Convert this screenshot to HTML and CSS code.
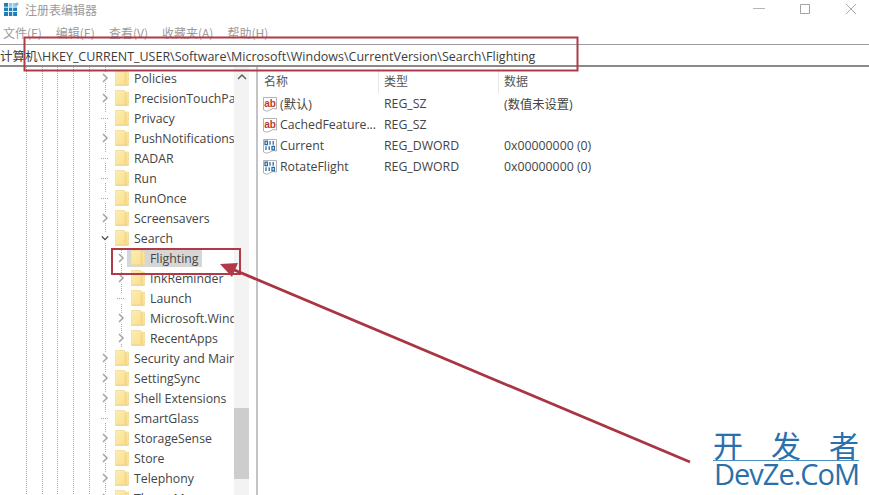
FILE: index.html
```html
<!DOCTYPE html>
<html lang="zh-CN">
<head>
<meta charset="utf-8">
<title>注册表编辑器</title>
<link rel="stylesheet" href="styles.css">
</head>
<body>
<svg class="defs" width="0" height="0" aria-hidden="true">
  <defs>
    <linearGradient id="fg" x1="0" y1="0" x2="1" y2="1"><stop offset="0" stop-color="#fdedb0"/><stop offset="1" stop-color="#f9de8e"/></linearGradient>
    <symbol id="folder" viewBox="0 0 14 16">
      <path d="M0 0.5H9.5V2H13.5V15.5H0Z" fill="url(#fg)" stroke="#f3dc98" stroke-width="0.8"/>
      <path d="M10.5 2.5V15" stroke="#f5d67e" stroke-width="1.6"/>
      <path d="M0.5 15H13" stroke="#f0d386" stroke-width="1"/>
    </symbol>
    <symbol id="ic-sz" viewBox="0 0 16 16">
      <path d="M1.5 1.5H14.5V13Q11 11.5 8 14T1.5 14Z" fill="#fff" stroke="#b2b2ba"/>
      <text x="8" y="10.5" text-anchor="middle" class="ab">ab</text>
    </symbol>
    <symbol id="ic-bin" viewBox="0 0 16 16">
      <path d="M1.5 1.5H14.5V13Q11 11.5 8 14T1.5 14Z" fill="#fff" stroke="#b2b2ba"/>
      <path d="M3 3.2H5.4V6.6H3ZM8 3V6.8M11.2 3V6.8M4 8.2V12M7.2 8.2V12M10 8.4H12.4V11.8H10Z" fill="none" stroke="#2a6aa3" stroke-width="1.3"/>
    </symbol>
    <symbol id="chev-r" viewBox="0 0 8 10"><path d="M2 1L6 5L2 9" fill="none" stroke="#a6a6a6" stroke-width="1.6"/></symbol>
    <symbol id="chev-d" viewBox="0 0 10 8"><path d="M1 2L5 6L9 2" fill="none" stroke="#404040" stroke-width="1.6"/></symbol>
  </defs>
</svg>

<div class="window">
  <header class="titlebar">
    <svg class="appicon" viewBox="0 0 15 14" width="15" height="14">
      <rect x="0" y="1" width="13" height="13" fill="#1f7fb8"/>
      <rect x="4.5" y="1" width="8.5" height="4" fill="#8cc8ea"/>
      <path d="M4.5 1V14M8.7 1V14M0 5.2H13M0 9.5H13" stroke="#dff0f8" stroke-width="1"/>
      <circle cx="13" cy="2" r="1.6" fill="#8fb4c9"/>
    </svg>
    <span class="apptitle">注册表编辑器</span>
    <div class="controls">
      <svg viewBox="0 0 12 12" width="12" height="12"><path d="M0 5.5H13" stroke="#b5b5b5"/></svg>
      <svg viewBox="0 0 12 12" width="12" height="12"><path d="M1.5 1.5H10.5V10.5H1.5Z" fill="none" stroke="#a3a3a3"/></svg>
      <svg viewBox="0 0 12 12" width="12" height="12"><path d="M1 1L11 11M11 1L1 11" stroke="#a8a8a8"/></svg>
    </div>
  </header>

  <nav class="menubar">
    <span>文件(F)</span><span>编辑(E)</span><span>查看(V)</span><span>收藏夹(A)</span><span>帮助(H)</span>
  </nav>

  <div class="address">计算机\HKEY_CURRENT_USER\Software\Microsoft\Windows\CurrentVersion\Search\Flighting</div>

  <main class="panes">
    <section class="tree">
      <div class="rows">
        <div class="row"><svg class="chev"><use href="#chev-r"/></svg><svg class="folder"><use href="#folder"/></svg><span>Policies</span></div>
        <div class="row"><svg class="chev"><use href="#chev-r"/></svg><svg class="folder"><use href="#folder"/></svg><span>PrecisionTouchPad</span></div>
        <div class="row leaf"><i class="chev"></i><svg class="folder"><use href="#folder"/></svg><span>Privacy</span></div>
        <div class="row"><svg class="chev"><use href="#chev-r"/></svg><svg class="folder"><use href="#folder"/></svg><span>PushNotifications</span></div>
        <div class="row leaf"><i class="chev"></i><svg class="folder"><use href="#folder"/></svg><span>RADAR</span></div>
        <div class="row leaf"><i class="chev"></i><svg class="folder"><use href="#folder"/></svg><span>Run</span></div>
        <div class="row leaf"><i class="chev"></i><svg class="folder"><use href="#folder"/></svg><span>RunOnce</span></div>
        <div class="row"><svg class="chev"><use href="#chev-r"/></svg><svg class="folder"><use href="#folder"/></svg><span>Screensavers</span></div>
        <div class="row"><svg class="chev"><use href="#chev-d"/></svg><svg class="folder"><use href="#folder"/></svg><span>Search</span></div>
        <div class="row sub"><svg class="chev"><use href="#chev-r"/></svg><div class="selected"><svg class="folder"><use href="#folder"/></svg><span>Flighting</span></div></div>
        <div class="row sub"><svg class="chev"><use href="#chev-r"/></svg><svg class="folder"><use href="#folder"/></svg><span>InkReminder</span></div>
        <div class="row sub leaf"><i class="chev"></i><svg class="folder"><use href="#folder"/></svg><span>Launch</span></div>
        <div class="row sub"><svg class="chev"><use href="#chev-r"/></svg><svg class="folder"><use href="#folder"/></svg><span>Microsoft.Windows</span></div>
        <div class="row sub"><svg class="chev"><use href="#chev-r"/></svg><svg class="folder"><use href="#folder"/></svg><span>RecentApps</span></div>
        <div class="row"><svg class="chev"><use href="#chev-r"/></svg><svg class="folder"><use href="#folder"/></svg><span>Security and Maintenance</span></div>
        <div class="row"><svg class="chev"><use href="#chev-r"/></svg><svg class="folder"><use href="#folder"/></svg><span>SettingSync</span></div>
        <div class="row"><svg class="chev"><use href="#chev-r"/></svg><svg class="folder"><use href="#folder"/></svg><span>Shell Extensions</span></div>
        <div class="row leaf"><i class="chev"></i><svg class="folder"><use href="#folder"/></svg><span>SmartGlass</span></div>
        <div class="row"><svg class="chev"><use href="#chev-r"/></svg><svg class="folder"><use href="#folder"/></svg><span>StorageSense</span></div>
        <div class="row"><svg class="chev"><use href="#chev-r"/></svg><svg class="folder"><use href="#folder"/></svg><span>Store</span></div>
        <div class="row"><svg class="chev"><use href="#chev-r"/></svg><svg class="folder"><use href="#folder"/></svg><span>Telephony</span></div>
        <div class="row"><svg class="chev"><use href="#chev-r"/></svg><svg class="folder"><use href="#folder"/></svg><span>ThemeManager</span></div>
      </div>
    </section>
    <div class="scrollbar">
      <svg class="scroll-up" viewBox="0 0 10 8" width="10" height="8"><path d="M1 6L5 2L9 6" fill="none" stroke="#606060" stroke-width="1.5"/></svg>
      <div class="thumb"></div>
    </div>
    <section class="list">
      <div class="list-head"><span>名称</span><span>类型</span><span>数据</span></div>
      <div class="list-row"><span class="name"><svg class="vicon"><use href="#ic-sz"/></svg>(默认)</span><span>REG_SZ</span><span>(数值未设置)</span></div>
      <div class="list-row"><span class="name"><svg class="vicon"><use href="#ic-sz"/></svg>CachedFeature...</span><span>REG_SZ</span><span></span></div>
      <div class="list-row"><span class="name"><svg class="vicon"><use href="#ic-bin"/></svg>Current</span><span>REG_DWORD</span><span>0x00000000 (0)</span></div>
      <div class="list-row"><span class="name"><svg class="vicon"><use href="#ic-bin"/></svg>RotateFlight</span><span>REG_DWORD</span><span>0x00000000 (0)</span></div>
    </section>
  </main>
</div>

<svg class="annotation" viewBox="0 0 869 495" width="869" height="495" aria-hidden="true">
  <rect x="24.5" y="37.5" width="553" height="33" fill="none" stroke="#b03a48" stroke-width="2"/>
  <rect x="112" y="249" width="128" height="25" fill="none" stroke="#b03a48" stroke-width="2"/>
  <path d="M690 462L232 269" stroke="#a93442" stroke-width="2.8" fill="none"/>
  <path d="M220 264L238 263L232 277Z" fill="#b03a48"/>
</svg>

<div class="watermark">
  <div class="wm-cn"><span>开</span><span>发</span><span>者</span></div>
  <div class="wm-en">DevZe.CoM</div>
</div>
</body>
</html>
```
FILE: styles.css
```css
* { box-sizing: border-box; }
html, body { margin: 0; height: 100%; }
body {
  width: 869px;
  height: 495px;
  overflow: hidden;
  background: #fff;
  font-family: "Open Sans", "Noto Sans CJK SC", sans-serif;
  font-size: 12.3px;
  color: #444;
  position: relative;
}
.defs { position: absolute; }
.ab { font: bold 10px "Liberation Sans", sans-serif; fill: #c23a2e; }
.window { display: flex; flex-direction: column; height: 495px; }

.titlebar { height: 22px; display: flex; align-items: center; padding: 0 12px 4px 4px; flex: none; }
.appicon { flex: none; }
.apptitle { margin-left: 6px; color: #9a9a9a; font-family: "Noto Sans CJK SC", sans-serif; font-size: 12px; }
.controls { margin-left: auto; display: flex; gap: 34px; margin-top: -1px; }

.menubar { height: 22px; flex: none; display: flex; gap: 14px; padding: 0 0 2px 3px; align-items: center; color: #9b9b9b; font-family: "Noto Sans CJK SC", sans-serif; font-size: 12px; }

.address { height: 23px; flex: none; border-top: 1px solid #9c9c9c; border-bottom: 2px solid #8a8a8a; padding-top: 1px; display: flex; align-items: center; font-size: 12.5px; color: #3c3c3c; white-space: nowrap; overflow: hidden; }

.panes { flex: 1; min-height: 0; display: flex; }

.tree {
  width: 234px;
  flex: none;
  overflow: hidden;
  padding-top: 1px;
  background-image:
    linear-gradient(#a8a8a8 50%, transparent 50%),
    linear-gradient(#a8a8a8 50%, transparent 50%),
    linear-gradient(#a8a8a8 50%, transparent 50%),
    linear-gradient(#a8a8a8 50%, transparent 50%),
    linear-gradient(#a8a8a8 50%, transparent 50%),
    linear-gradient(#a8a8a8 50%, transparent 50%);
  background-size: 1px 2px;
  background-repeat: repeat-y;
  background-position: 26px 0, 42px 0, 57px 0, 73px 0, 89px 0, 105px 0;
}
.rows { display: flex; flex-direction: column; width: 234px; overflow: hidden; }
.row { height: 20px; display: flex; align-items: center; padding-left: 101px; white-space: nowrap; flex: none; }
.row.sub {
  padding-left: 117px;
  background: linear-gradient(#a8a8a8 50%, transparent 50%) 121px 0 / 1px 2px repeat-y;
}
.chev { width: 8px; height: 10px; flex: none; margin-right: 6px; overflow: visible; background: #fff; }
.row .folder { width: 14px; height: 16px; flex: none; }
.row span { margin-left: 5px; color: #444; }
.selected { display: flex; align-items: center; height: 17px; margin-left: -4px; padding: 0 4px; background: #d6d6d6; }
.row.leaf .chev { background: linear-gradient(90deg, #a8a8a8 50%, transparent 50%) 4px 50% / 2px 1px repeat-x, #fff; }

.scrollbar { width: 15px; flex: none; background: #f3f3f3; display: flex; flex-direction: column; align-items: center; padding-top: 6px; }
.scroll-up { flex: none; }
.thumb { width: 15px; height: 71px; background: #cdcdcd; margin-top: 327px; flex: none; }

.list { flex: 1; border-left: 2px solid #c4c4c4; margin-left: 7px; padding-left: 6px; padding-top: 2px; color: #444; }
.list-head, .list-row { display: grid; grid-template-columns: 120px 120px 1fr; }
.list-head {
  height: 24px;
  padding-bottom: 2px;
  align-items: center;
  font-family: "Noto Sans CJK SC", sans-serif;
  font-size: 12px;
  color: #555;
  background:
    linear-gradient(#e6e6e6, #e6e6e6) 114px 0 / 1px 100% no-repeat,
    linear-gradient(#e6e6e6, #e6e6e6) 234px 0 / 1px 100% no-repeat;
}
.list-row { height: 21px; align-items: center; white-space: nowrap; }
.name { display: flex; align-items: center; margin-left: -2px; }
.vicon { width: 16px; height: 16px; margin-right: 2px; flex: none; }

.annotation { position: absolute; left: 0; top: 0; pointer-events: none; }

.watermark { position: absolute; left: 713px; top: 428px; width: 146px; color: #2a70ac; }
.wm-cn { display: flex; justify-content: space-between; font-family: "Noto Sans CJK SC", sans-serif; font-size: 30px; line-height: 32px; border-bottom: 1px solid #4d90c4; height: 33px; }
.wm-en { font-family: "Open Sans", "Liberation Sans", sans-serif; font-size: 29px; line-height: 26px; letter-spacing: -1px; padding-left: 1px; white-space: nowrap; }
```
